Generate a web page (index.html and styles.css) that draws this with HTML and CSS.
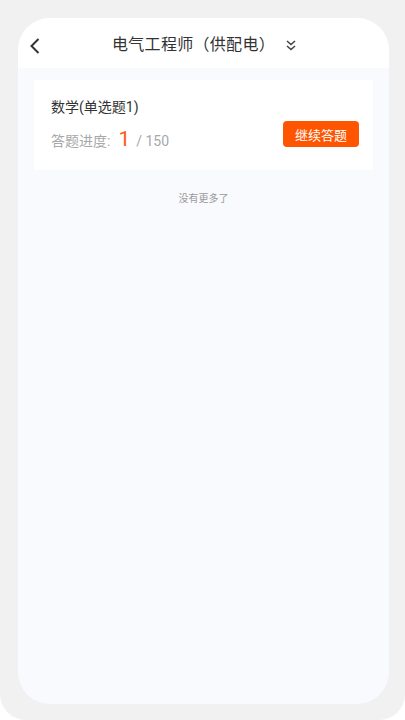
FILE: index.html
```html
<!DOCTYPE html>
<html lang="zh">
<head>
<meta charset="utf-8">
<link rel="stylesheet" href="styles.css">
</head>
<body>
<div class="frame">
  <div class="screen">
    <header class="nav">
      <svg class="back" width="12" height="18" viewBox="0 0 12 18"><path d="M9.5 2 L2.5 9 L9.5 16" fill="none" stroke="#333" stroke-width="2"/></svg>
      <div class="title">电气工程师（供配电）</div>
      <svg class="more" width="12" height="14" viewBox="0 0 12 14"><path d="M2 2 L6 5.5 L10 2 M2 7 L6 10.5 L10 7" fill="none" stroke="#444" stroke-width="1.6"/></svg>
    </header>
    <main class="content">
      <div class="card">
        <div class="info">
          <div class="name">数学(单选题1)</div>
          <div class="progress"><span class="label">答题进度:</span><span class="cur">1</span><span class="total">/ 150</span></div>
        </div>
        <button class="btn">继续答题</button>
      </div>
      <div class="nomore">没有更多了</div>
    </main>
  </div>
</div>
</body>
</html>
```
FILE: styles.css
```css
html, body { margin: 0; padding: 0; background: #fff; }
body { font-family: Roboto, "Noto Sans CJK SC", sans-serif; }
.frame {
  width: 405px; height: 720px; box-sizing: border-box;
  background: #f1f1f1; padding: 18px 16px 16px 18px;
  border-radius: 0 0 26px 26px;
}
.screen {
  height: 686px; background: #f9fafe; border-radius: 32px; overflow: hidden;
  display: flex; flex-direction: column;
}
.nav {
  height: 50px; background: #fff; display: flex; align-items: center;
  justify-content: center; position: relative; flex: none; padding-right: 20px;
}
.back { position: absolute; left: 11px; top: 19px; }
.title { font-size: 16px; color: #333; letter-spacing: 0.3px; }
.more { position: absolute; left: 267px; top: 21px; }
.content { padding: 12px 16px 0 16px; display: flex; flex-direction: column; }
.card {
  background: #fff; height: 90px; box-sizing: border-box;
  padding: 15px 14px 0 17px; display: flex; justify-content: space-between; align-items: flex-start;
}
.name { font-size: 14px; color: #333; line-height: 24px; }
.progress { margin-top: 8px; display: flex; align-items: baseline; color: #a8a8a8; font-size: 14px; }
.cur { color: #ff5a0f; font-size: 21px; margin: 0 6px 0 8px; }
.btn {
  margin-top: 26px; width: 76px; height: 26px; border: none; border-radius: 4px;
  background: #ff5500; color: #fff; font-family: inherit; font-size: 13px; padding: 0;
}
.nomore { text-align: center; font-size: 10px; color: #999; margin-top: 20px; }
```
